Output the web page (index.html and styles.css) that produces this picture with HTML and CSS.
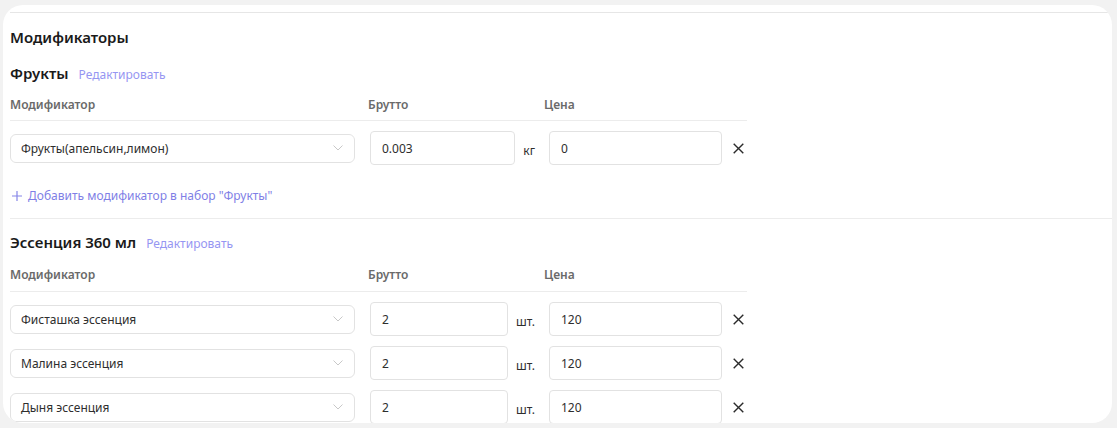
FILE: index.html
```html
<!DOCTYPE html>
<html lang="ru">
<head>
<meta charset="utf-8">
<link rel="stylesheet" href="styles.css">
</head>
<body>
<div class="card">
  <div class="content">
    <h2 class="title">Модификаторы</h2>

    <section class="group">
      <div class="group-head">
        <span class="group-name">Фрукты</span>
        <a class="edit-link">Редактировать</a>
      </div>
      <div class="table">
        <div class="thead">
          <div class="th th-mod">Модификатор</div>
          <div class="th th-brutto">Брутто</div>
          <div class="th th-price">Цена</div>
        </div>
        <div class="row">
          <div class="select"><span>Фрукты(апельсин,лимон)</span><svg class="chev" width="10" height="6" viewBox="0 0 10 6"><path d="M0.5 0.5 L5 5 L9.5 0.5" fill="none" stroke="#c8c8c8" stroke-width="1"/></svg></div>
          <div class="brutto"><div class="input">0.003</div><span class="unit">кг</span></div>
          <div class="price"><div class="input">0</div></div>
          <div class="remove"><svg width="11" height="11" viewBox="0 0 11 11"><path d="M0.7 0.7 L10.3 10.3 M10.3 0.7 L0.7 10.3" stroke="#2b2b2b" stroke-width="1.4"/></svg></div>
        </div>
      </div>
      <a class="add-link"><svg class="plus" width="10" height="10" viewBox="0 0 10 10"><path d="M5 0 V10 M0 5 H10" stroke="#8585e8" stroke-width="1.2"/></svg><span>Добавить модификатор в набор "Фрукты"</span></a>
    </section>

    <section class="group group-sep">
      <div class="group-head">
        <span class="group-name">Эссенция 360 мл</span>
        <a class="edit-link">Редактировать</a>
      </div>
      <div class="table">
        <div class="thead">
          <div class="th th-mod">Модификатор</div>
          <div class="th th-brutto">Брутто</div>
          <div class="th th-price">Цена</div>
        </div>
        <div class="row">
          <div class="select"><span>Фисташка эссенция</span><svg class="chev" width="10" height="6" viewBox="0 0 10 6"><path d="M0.5 0.5 L5 5 L9.5 0.5" fill="none" stroke="#c8c8c8" stroke-width="1"/></svg></div>
          <div class="brutto"><div class="input">2</div><span class="unit">шт.</span></div>
          <div class="price"><div class="input">120</div></div>
          <div class="remove"><svg width="11" height="11" viewBox="0 0 11 11"><path d="M0.7 0.7 L10.3 10.3 M10.3 0.7 L0.7 10.3" stroke="#2b2b2b" stroke-width="1.4"/></svg></div>
        </div>
        <div class="row">
          <div class="select"><span>Малина эссенция</span><svg class="chev" width="10" height="6" viewBox="0 0 10 6"><path d="M0.5 0.5 L5 5 L9.5 0.5" fill="none" stroke="#c8c8c8" stroke-width="1"/></svg></div>
          <div class="brutto"><div class="input">2</div><span class="unit">шт.</span></div>
          <div class="price"><div class="input">120</div></div>
          <div class="remove"><svg width="11" height="11" viewBox="0 0 11 11"><path d="M0.7 0.7 L10.3 10.3 M10.3 0.7 L0.7 10.3" stroke="#2b2b2b" stroke-width="1.4"/></svg></div>
        </div>
        <div class="row">
          <div class="select"><span>Дыня эссенция</span><svg class="chev" width="10" height="6" viewBox="0 0 10 6"><path d="M0.5 0.5 L5 5 L9.5 0.5" fill="none" stroke="#c8c8c8" stroke-width="1"/></svg></div>
          <div class="brutto"><div class="input">2</div><span class="unit">шт.</span></div>
          <div class="price"><div class="input">120</div></div>
          <div class="remove"><svg width="11" height="11" viewBox="0 0 11 11"><path d="M0.7 0.7 L10.3 10.3 M10.3 0.7 L0.7 10.3" stroke="#2b2b2b" stroke-width="1.4"/></svg></div>
        </div>
      </div>
    </section>
  </div>
</div>
</body>
</html>
```

FILE: styles.css
```css
* { box-sizing: border-box; }
html, body { margin: 0; padding: 0; }
body {
  background: #f2f2f2;
  padding: 5px 5px 5px 3px;
  font-family: "Noto Sans", "Open Sans", sans-serif;
  color: #1f1f1f;
  height: 428px;
  overflow: hidden;
}
.card {
  background: #fff;
  border-radius: 20px;
  height: 418px;
  overflow: hidden;
  padding: 7px 0 0 7px;
}
.content {
  border-top: 1px solid #e6e6e6;
}
.title {
  margin: 12px 0 0;
  font-size: 15px;
  font-weight: 600;
  line-height: 24px;
  color: #1a1a1a;
}
.group-head {
  display: flex;
  align-items: baseline;
  gap: 10px;
  height: 20px;
  line-height: 20px;
  margin-top: 14px;
}
.group-name {
  font-size: 15px;
  font-weight: 600;
  color: #1a1a1a;
}
.edit-link {
  font-size: 12px;
  color: #9696f2;
  cursor: pointer;
}
.table { width: 737px; margin-top: 11px; }
.thead {
  display: flex;
  height: 27px;
  border-bottom: 1px solid #ececec;
  font-size: 12px;
  font-weight: 600;
  color: #6a6a6a;
  line-height: 20px;
  padding-top: 1px;
}
.th-mod { width: 358px; }
.th-brutto { width: 176px; }
.row {
  display: flex;
  align-items: center;
  height: 34px;
  margin-top: 10px;
  font-size: 12px;
  color: #2e2e2e;
}
.select {
  width: 345px;
  height: 29px;
  border: 1px solid #e2e2e2;
  border-radius: 6px;
  display: flex;
  align-items: center;
  justify-content: space-between;
  padding: 0 11px 0 10px;
}
.chev { display: block; }
.brutto {
  width: 171px;
  margin-left: 15px;
  display: flex;
  align-items: center;
  padding-right: 6px;
  height: 34px;
}
.input {
  height: 34px;
  border: 1px solid #e2e2e2;
  border-radius: 4px;
  padding: 0 11px;
  display: flex;
  align-items: center;
  flex: 1;
}
.unit { margin-left: 8px; padding-top: 5px; }
.price {
  width: 173px;
  margin-left: 8px;
  display: flex;
  height: 34px;
}
.remove {
  margin-left: 11px;
  display: flex;
  align-items: center;
}
.add-link {
  display: flex;
  align-items: center;
  gap: 6px;
  margin-top: 21px;
  height: 20px;
  line-height: 20px;
  font-size: 12px;
  color: #7f7fe6;
  padding-left: 2px;
  cursor: pointer;
}
.plus { display: block; }
.group-sep {
  border-top: 1px solid #ececec;
  margin-top: 12px;
}
.group-sep .group-head { margin-top: 13px; }
.group-sep .table { margin-top: 13px; }
.group-sep .thead { padding-top: 0; }
```
